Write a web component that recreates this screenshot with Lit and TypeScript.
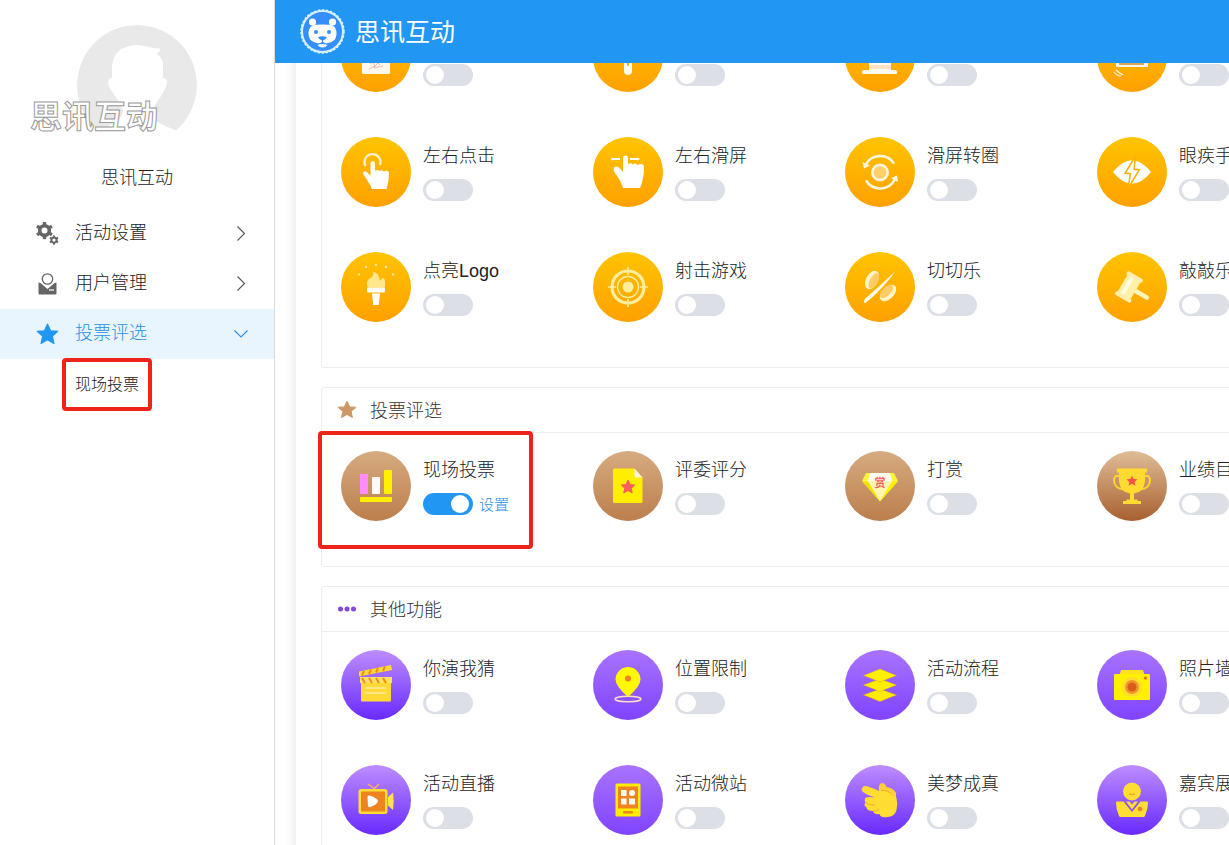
import { LitElement, html, css, svg, nothing } from "lit";
import type { SVGTemplateResult } from "lit";
import { customElement, property } from "lit/decorators.js";
import { classMap } from "lit/directives/class-map.js";

const STAR = "M0 -10 L3 -3.6 L9.8 -3 L4.7 1.6 L6.2 8.6 L0 5 L-6.2 8.6 L-4.7 1.6 L-9.8 -3 L-3 -3.6 Z";

const icons: Record<string, SVGTemplateResult> = {
  note: svg`<rect x="21" y="20" width="28" height="32" rx="1" fill="#fff8ec"/>
    <path d="M29 42 l3 -2 2 4 3 -3 2 2 M28 47 l6 -3 -1 2 9 -2" stroke="#ffaaa0" stroke-width=".8" fill="none"/>`,
  pill: svg`<rect x="31" y="20" width="8" height="33" rx="4" fill="#fffaf0"/><rect x="34" y="30" width="2" height="14" rx="1" fill="#ffb000"/>`,
  hat: svg`<path d="M24 20h22v28H24z" fill="#fffaf2"/><path d="M24 43h22v4H24z" fill="#ffe3c4"/><rect x="17" y="48" width="35" height="4" rx="1.5" fill="#fffaf0"/>`,
  shake: svg`<rect x="19" y="20" width="32" height="25" rx="1" fill="#fff8e6"/><rect x="22" y="24" width="25" height="19" fill="#d9a45c"/>
    <path d="M17 50 q3 4 7 4 M19 48 q3 3 7 5" stroke="#fff8e6" stroke-width="1.2" fill="none"/>`,
  tap: svg`<path d="M24.500 29 a8 8 0 1 1 14.500 -1" stroke="#fff3d0" stroke-width="2.200" fill="none"/>
    <path d="M29.500 26.500 q0 -2.500 2.200 -2.500 q2.200 0 2.200 2.500 v7.500 q2 -2 4.400 0 q2.200 -1.500 4.400 0.500 q4.500 -2 5.300 1 q0 8 -2.500 16.500 h-14.500 q-2 -5 -7.500 -13 q-2 -3 -1 -4.300 q2.500 -1.500 4.500 1.500 l2.500 2.500z" fill="#fff"/>`,
  swipe: svg`<path d="M19 22h8M37 22h8" stroke="#fff" stroke-width="2.200"/><path d="M17.500 22l2.500 -1.800v3.600zM47 22l-2.500 -1.800v3.600z" fill="#fff"/>
    <path d="M30 21.500 q0 -3 2.500 -3 q2.500 0 2.500 3 v6 q2 -2.500 5 0 q2 -2 4.500 0.500 q6 -2.500 6.500 2 q0 12 -4 21 h-17 q-2 -7 -8 -15 q-2.500 -4 -0.500 -6 q3 -1.500 5.500 1.500 l3 3z" fill="#fff"/>`,
  rotate: svg`<circle cx="35" cy="35.500" r="9" fill="#fff5dd"/><circle cx="35" cy="35.500" r="6.300" fill="#ffd06a"/>
    <path d="M20.500 28 A16.500 16.500 0 0 1 49 26.500 M50 42 A16.500 16.500 0 0 1 21 43.500" stroke="#fff8e0" stroke-width="2.500" fill="none"/>
    <path d="M17.500 25l1.500 6.500 6 -3zM53 45l-1 -6.500 -6 2.500z" fill="#fff8e0"/>`,
  eye: svg`<path d="M16 35 Q35 11.500 54 35 Q35 58.500 16 35z" fill="#fff"/>
    <path d="M38.500 19 L28 36.500 h5.500 L31 51.500 L42.500 32.500 h-5.500z" fill="#fff" stroke="#ffae08" stroke-width="1.500" stroke-linejoin="round"/>`,
  torch: svg`<g fill="#fff8dc"><circle cx="18" cy="22.500" r="1"/><circle cx="25" cy="15" r="1"/><circle cx="35" cy="13" r="1"/><circle cx="45" cy="15" r="1"/><circle cx="52" cy="22.500" r="1"/></g>
    <path d="M26.500 35.500 q-2 -7 3 -9.500 q4 -3 2.500 -6.500 q7 2.500 6.500 9 q2 -0.500 2.500 -2.500 q3 0 3 4 v5.500z" fill="#ffe78e"/>
    <rect x="26" y="35.500" width="18" height="5" rx="1.500" fill="#fff"/><path d="M31 41.500h8l-1.200 11.500h-5.600z" fill="#fff"/>`,
  target: svg`<g stroke="#ffeda0" fill="none"><circle cx="35" cy="35" r="16" stroke-width="3.200"/><circle cx="35" cy="35" r="10.500" stroke-width="1.300"/>
    <path d="M35 15v8M35 47v8M15 35h8M47 35h8" stroke-width="1.600"/></g><circle cx="35" cy="35" r="5.500" fill="#ffef9c"/>`,
  slice: svg`<path d="M50.500 19 Q38 37 20.500 51 l-1.800 -0.500 1 -3.500 Q36 33 50.500 19z" fill="#fffbe6"/>
    <g transform="rotate(28 27 28)"><ellipse cx="27" cy="28" rx="6" ry="10" fill="#fff5c8"/><ellipse cx="29" cy="28" rx="4" ry="8.500" fill="#ffcc66"/></g>
    <g transform="rotate(45 43 41)"><ellipse cx="43" cy="41" rx="6" ry="10" fill="#fff5c8"/><ellipse cx="41" cy="41" rx="4" ry="8.500" fill="#ffcc66"/></g>`,
  hammer: svg`<g transform="rotate(30 32 35)"><rect x="38" y="33" width="17" height="4.500" rx="2.200" fill="#fff2bd"/>
    <rect x="24.500" y="24" width="15" height="22" fill="#fff2a6"/><rect x="28" y="24" width="4" height="22" fill="#fffbe0"/>
    <rect x="23" y="21.500" width="18" height="4" rx="1.500" fill="#ffeeb0"/><rect x="23" y="44.500" width="18" height="4" rx="1.500" fill="#ffeeb0"/></g>`,
  vote: svg`<rect x="19" y="23" width="8" height="20" rx="1" fill="#ff8cff"/><rect x="31" y="26" width="8" height="17" rx="1" fill="#fffafa"/>
    <rect x="43" y="19" width="8" height="24" rx="1" fill="#fff000"/><rect x="19" y="46" width="32" height="5" rx="1" fill="#ffee00"/>`,
  score: svg`<path d="M21.500 17.500h20l8 9v24.500q0 1 -1 1h-27q-1.500 0 -1.500 -1v-32q0 -1.500 1.500 -1.500z" fill="#ffee00"/><path d="M41.500 17.500v7.500q0 1.500 1.500 1.500h6.500z" fill="#fff6cf"/>
    <path d=${STAR} transform="translate(35 36) scale(.65)" fill="#ff5d5d" stroke="#ff5d5d" stroke-width="2" stroke-linejoin="round"/>`,
  reward: svg`<path d="M21 22h28l4 8 -18 20.500L17 30z" fill="#fff33a"/><path d="M17 30l7 1 11 19.500z" fill="#f5e100"/><path d="M53 30l-7 1 -11 19.500z" fill="#ffef00"/>
    <path d="M25 22h20l2 8 -12 18L23 30z" fill="#fffdf0"/><path d="M23 30h24L35 50z" fill="#fff6b0"/>
    <text x="35" y="35.500" text-anchor="middle" font-size="11" font-weight="700" fill="#ff6161">赏</text>`,
  trophy: svg`<g fill="none" stroke="#ffd42f" stroke-width="2"><path d="M22 25h-3q-3 2 -1.500 7q2 6 8 6M48 25h3q3 2 1.500 7q-2 6 -8 6"/></g>
    <path d="M20 17.500h30v4h-2v9q-1 11 -11 12v6h3.500v1.500h3.500v3h-18v-3h3.500v-1.500h3.500v-6q-10 -1 -11 -12v-9h-2z" fill="#ffda30"/>
    <path d=${STAR} transform="translate(35 30) scale(.55)" fill="#fb5148"/>`,
  clapper: svg`<path d="M20 33h30v17.500q0 1 -1 1h-28q-1 0 -1 -1z" fill="#ffd936"/><path d="M24 38h21M24 43h21" stroke="#fff8cf" stroke-width="1.200"/>
    <path d="M18 21.500l32 -6.500 1 5 -33 6.500z" fill="#ffd936"/><rect x="19" y="27" width="32" height="6" fill="#ffe064"/>
    <path d="M23 21l-2 4.500M30 19.500l-2 4.500M37 18l-2 4.500M44 16.500l-2 4.500M21 28l3 5M28 28l3 5M35 28l3 5M42 28l3 5" stroke="#f08c1e" stroke-width="2"/>`,
  pin: svg`<ellipse cx="35" cy="49" rx="13" ry="2.800" fill="none" stroke="#ffdfc0" stroke-width="1.600"/>
    <path d="M35 47 Q22.500 36 22.500 29.500 a12.500 12.500 0 0 1 25 0 Q47.500 36 35 47z" fill="#fff900"/><circle cx="35" cy="28.500" r="3" fill="#f08020"/>`,
  layers: svg`<g stroke="#e2a600" stroke-width=".4"><path d="M35 39l16.500 6q-8 3 -16.500 6.500q-8.500 -3.500 -16.500 -6.500z" fill="#ffec00"/><path d="M35 29l16.500 6q-8 3 -16.500 6.500q-8.500 -3.500 -16.500 -6.500z" fill="#ffee00"/>
    <path d="M35 19l16.500 6.500q-8 3 -16.500 6.500q-8.500 -3.500 -16.500 -6.500z" fill="#fff000"/></g>`,
  camera: svg`<path d="M24 20h22l1.500 5h-25z" fill="#ffe21c"/><rect x="17" y="24" width="36" height="26" rx="1" fill="#fff000"/>
    <circle cx="35" cy="37" r="10" fill="#ffda30"/><circle cx="35" cy="37" r="7" fill="#f2962b"/><circle cx="35" cy="37" r="4.500" fill="#d95c18"/><circle cx="48.500" cy="28" r="1.500" fill="#e26a1a"/>`,
  live: svg`<path d="M34 24l-7 -5M33 24l5 -5" stroke="#ffb75a" stroke-width="1.400"/><path d="M47 32l5 -4.500q1.500 9 0 17.500l-5 -4.500z" fill="#ffe14c"/>
    <rect x="17.500" y="24" width="29" height="25" rx="2.500" fill="#ffdb36"/><rect x="20" y="26.500" width="24" height="20" rx="1" fill="#ee8420"/>
    <path d="M26.500 32q0 -2 2 -1.500q8 2.500 8.500 5.500q-0.500 3.500 -8 6q-1.500 0.500 -2 -1z" fill="#fff"/>`,
  site: svg`<rect x="22.500" y="18.500" width="25" height="33" rx="1.500" fill="#ffee00"/><rect x="25" y="21.500" width="20" height="22" fill="#f08420"/>
    <g fill="#fffaf2"><rect x="28" y="25" width="5.500" height="6"/><circle cx="39" cy="28" r="3"/><rect x="28" y="33.500" width="5.500" height="6"/><rect x="36" y="33.500" width="6" height="6"/></g>
    <rect x="30" y="46" width="10" height="2.500" rx="1" fill="#f08420"/>`,
  hand: svg`<path d="M34 26q-1 -8 3.500 -8q2.500 0 4 4q7 1 9.500 6v8l-14 -6z" fill="#ffcf3a"/>
    <path d="M17 23.500q1 -3.500 6 -2q6 2 11 4.500q4 -2 8 0q7 1.500 9.500 7q1.500 6 0 12q-2 7 -9 7q-7 1 -8 -3q-5 1 -6.500 -3q-6 0 -6.500 -3.500q-3.500 -2.500 -1 -5q-2 -3 0.500 -5q3 -1 9 0q-9 -3 -12 -5.500q-2 -2 -1.500 -3.500z" fill="#ffdd33"/>
    <path d="M21 38q5 3 9 2M28 46q4 1 6 -2M36 25.500q7 -1 12 5" stroke="#f3a728" stroke-width=".9" fill="none"/>`,
  guest: svg`<circle cx="35" cy="26.500" r="9" fill="#ffdd33"/><path d="M32 29q3 1 6 0" stroke="#e69a20" stroke-width="1" fill="none"/>
    <path d="M19 37.500q0 -1 1 -1h6.500l8.500 10.500 8.500 -10.500h6.500q1 0 1 1q0 7 -3 13.500q-0.500 1 -2 1h-22q-1.500 0 -2 -1q-3 -6.500 -3 -13.500z" fill="#ffdd33"/>
    <path d="M29 36.500h3.500l2.500 3 2.500 -3h3.500l-6 8z" fill="#ffdd33"/><circle cx="43" cy="44" r="2.300" fill="#ee7f22"/>`,
};

interface Feature { icon: string; label?: string; tone: string; on?: boolean; marked?: boolean }
interface Group { title?: string; kind: "games" | "vote" | "other"; items: Feature[] }

const groups: Group[] = [
  { kind: "games", items: [
    { icon: "note", tone: "gold" }, { icon: "pill", tone: "gold" }, { icon: "hat", tone: "gold" }, { icon: "shake", tone: "gold" },
    { icon: "tap", label: "左右点击", tone: "gold" }, { icon: "swipe", label: "左右滑屏", tone: "gold" },
    { icon: "rotate", label: "滑屏转圈", tone: "gold" }, { icon: "eye", label: "眼疾手快", tone: "gold" },
    { icon: "torch", label: "点亮Logo", tone: "gold" }, { icon: "target", label: "射击游戏", tone: "gold" },
    { icon: "slice", label: "切切乐", tone: "gold" }, { icon: "hammer", label: "敲敲乐", tone: "gold" },
  ] },
  { title: "投票评选", kind: "vote", items: [
    { icon: "vote", label: "现场投票", tone: "bronze", on: true, marked: true }, { icon: "score", label: "评委评分", tone: "bronze" },
    { icon: "reward", label: "打赏", tone: "bronze" }, { icon: "trophy", label: "业绩目标", tone: "copper" },
  ] },
  { title: "其他功能", kind: "other", items: [
    { icon: "clapper", label: "你演我猜", tone: "violet" }, { icon: "pin", label: "位置限制", tone: "purple" },
    { icon: "layers", label: "活动流程", tone: "purple" }, { icon: "camera", label: "照片墙", tone: "purple" },
    { icon: "live", label: "活动直播", tone: "violet" }, { icon: "site", label: "活动微站", tone: "purple" },
    { icon: "hand", label: "美梦成真", tone: "violet" }, { icon: "guest", label: "嘉宾展示", tone: "violet" },
  ] },
];

@customElement("feature-card")
class FeatureCard extends LitElement {
  @property({ attribute: false }) feature!: Feature;

  static styles = css`
    :host { display: block; height: 115px; }
    .card { position: relative; display: flex; gap: 12px; }
    .disc { flex: none; width: 70px; height: 70px; border-radius: 50%; }
    .gold { background: linear-gradient(#ffc400, #ffa000); }
    .bronze { background: linear-gradient(#d6ab80, #bc7e4c); }
    .copper { background: linear-gradient(#dfbd97, #a86030); }
    .violet { background: linear-gradient(#bd8dff, #682aff); }
    .purple { background: linear-gradient(#a973ff, #7f44ff); }
    .icon { display: block; width: 70px; height: 70px; }
    .info { display: flex; flex-direction: column; gap: 11px; padding-top: 7px; }
    .label { height: 24px; font-size: 18px; line-height: 24px; white-space: nowrap; color: #222; }
    .controls { display: flex; gap: 6px; height: 22px; align-items: center; }
    .switch { appearance: none; position: relative; flex: none; width: 50px; height: 22px; margin: 0; border-radius: 11px; background: #dcdfe6; cursor: pointer; }
    .switch::before { content: ""; position: absolute; left: 3px; top: 2px; width: 18px; height: 18px; border-radius: 50%; background: #fff; }
    .switch:checked { background: #2196f3; }
    .switch:checked::before { left: 28px; }
    .setup { font-size: 15px; line-height: 24px; padding-top: 2px; color: #2a8fe2; text-decoration: none; white-space: nowrap; }
    .mark { position: absolute; left: -23px; top: -20px; box-sizing: border-box; width: 215px; height: 118px; border: 4px solid #ee241b; border-radius: 4px; pointer-events: none; }
  `;

  render() {
    const f = this.feature;
    return html`<div class="card">
      <div class=${classMap({ disc: true, [f.tone]: true })}><svg class="icon" viewBox="0 0 70 70" aria-hidden="true">${icons[f.icon]}</svg></div>
      <div class="info">
        <label class="label" for="toggle">${f.label ?? nothing}</label>
        <div class="controls">
          <input class="switch" id="toggle" type="checkbox" role="switch" .checked=${!!f.on} aria-label=${f.label ?? "开关"} />
          ${f.on ? html`<a class="setup" href="#setup">设置</a>` : nothing}
        </div>
      </div>
      ${f.marked ? html`<div class="mark"></div>` : nothing}
    </div>`;
  }
}

@customElement("side-menu")
class SideMenu extends LitElement {
  static styles = css`
    :host { display: flex; flex-direction: column; box-sizing: border-box; flex: none; width: 275px; border-right: 1px solid #d9dce1; background: #fff; color: #222; }
    .profile { position: relative; display: flex; flex-direction: column; align-items: center; gap: 21px; padding-top: 25px; height: 184px; }
    .avatar { width: 120px; height: 120px; }
    .brand { position: absolute; left: 30px; top: 97px; font-size: 32px; line-height: 40px; font-weight: 700; color: #fff; -webkit-text-stroke: 1px #999; white-space: nowrap; }
    .name { font-size: 18px; line-height: 24px; }
    .item { display: flex; align-items: center; width: 100%; height: 50px; padding: 0 25px 0 36px; border: 0; background: none; font: inherit; font-size: 18px; line-height: 24px; color: inherit; text-align: left; cursor: pointer; }
    .glyph { flex: none; width: 24px; height: 24px; margin-right: 15px; color: #666; }
    .text { flex: 1; padding-bottom: 3px; }
    .arrow { width: 16px; height: 16px; color: #555; }
    .active, .active .arrow { color: #2a8fe2; }
    .active { background: #e8f4fe; }
    .active .glyph { color: #2196f3; }
    .sub { align-self: flex-start; box-sizing: border-box; height: 53px; margin: -1px 0 0 62px; padding: 0 9px; border: 4px solid #ee241b; border-radius: 4px; font-size: 16px; line-height: 45px; color: inherit; text-decoration: none; white-space: nowrap; }
  `;

  private gear(cx: number, cy: number, r: number) {
    return svg`<circle cx=${cx} cy=${cy} r=${r} fill="none" stroke="currentColor" stroke-width=${r * 0.75}/>
      ${[0, 60, 120, 180, 240, 300].map((a) => svg`<rect x=${cx - r * 0.35} y=${cy - r * 1.8} width=${r * 0.7} height=${r * 0.7} fill="currentColor" transform=${`rotate(${a} ${cx} ${cy})`}/>`)}`;
  }

  render() {
    const right = html`<svg class="arrow" viewBox="0 0 16 16" fill="none" stroke="currentColor" stroke-width="1.1"><path d="M4.500 0.500l7 7 -7 7"/></svg>`;
    return html`
      <div class="profile">
        <svg class="avatar" viewBox="0 0 120 120" aria-hidden="true">
          <path fill="#e9e9e9" d="M60 0a60 60 0 0 1 39 105.500Q88 101 82 98Q76 94 75 87Q76 82 80 77L86 68Q90 61 90 56Q90 54 86 53V40Q86 33 79.500 28.500Q83 27 83.500 23.500Q78 24 70 21.500Q65 20 60 20Q35 21 35 44V53Q31 53 31 57Q31 62 36 68L42 77Q46 82 46 87Q44 94 38 98Q32 101 21 105.500A60 60 0 0 1 60 0z"/>
        </svg>
        <div class="brand">思讯互动</div>
        <div class="name">思讯互动</div>
      </div>
      <button class="item">
        <svg class="glyph" viewBox="0 0 24 24">${this.gear(8.5, 8.5, 4.8)}${this.gear(18, 18, 2.6)}</svg>
        <span class="text">活动设置</span>${right}
      </button>
      <button class="item">
        <svg class="glyph" viewBox="0 0 24 24"><circle cx="11.500" cy="7" r="5.200" fill="none" stroke="currentColor" stroke-width="1.300"/>
          <path fill="currentColor" d="M2.500 10.500l2 0.500 7 6 7 -6 2 -0.500v11q0 1 -1 1h-16q-1 0 -1 -1z"/><path d="M13 18h5" stroke="#fff" stroke-width="1.200"/></svg>
        <span class="text">用户管理</span>${right}
      </button>
      <button class="item active" aria-expanded="true">
        <svg class="glyph" viewBox="-12 -12 24 24"><path d=${STAR} transform="translate(-.5 .5) scale(1.05)" fill="currentColor" stroke="currentColor" stroke-width="1" stroke-linejoin="round"/></svg>
        <span class="text">投票评选</span>
        <svg class="arrow" viewBox="0 0 16 16" fill="none" stroke="currentColor" stroke-width="1.1"><path d="M1.500 4.500l6.500 6.500 6.500 -6.500"/></svg>
      </button>
      <a class="sub" href="#vote">现场投票</a>
    `;
  }
}

@customElement("app-root")
class AppRoot extends LitElement {
  static styles = css`
    :host { display: flex; height: 100vh; overflow: hidden; background: #fff; color: #222; font-family: "Liberation Sans", "Noto Sans CJK SC", sans-serif; font-weight: 300; }
    .main { flex: 1; min-width: 0; display: flex; flex-direction: column; }
    .top { flex: none; display: flex; align-items: center; gap: 10px; height: 63px; padding: 0 25px; background: #2196f3; color: #fff; }
    .logo { width: 45px; height: 45px; }
    .title { margin: 0; font-size: 25px; line-height: 36px; font-weight: 400; }
    .scroll { flex: 1; min-height: 0; overflow: auto; scrollbar-width: none; padding-left: 21px; }
    .sheet { display: flex; flex-direction: column; gap: 19px; width: max-content; min-width: 100%; box-sizing: border-box; padding: 0 25px 20px; background: #fff; box-shadow: 0 0 12px #0000001f; }
    .panel { border: 1px solid #ebeef0; border-radius: 3px; }
    .games { border-top: 0; }
    .head { display: flex; align-items: center; gap: 13px; height: 44px; padding-left: 15px; border-bottom: 1px solid #ebeef0; }
    .head-icon { width: 20px; height: 20px; }
    .head-text { margin: 0; padding-top: 2px; font-size: 18px; line-height: 24px; font-weight: 300; color: #333; }
    .grid { display: grid; grid-template-columns: repeat(4, minmax(252px, 1fr)); padding: 18px 0 0 19px; }
  `;

  firstUpdated() {
    const area = this.renderRoot.querySelector(".scroll");
    if (area) area.scrollTop = 59;
  }

  render() {
    return html`
      <side-menu></side-menu>
      <div class="main">
        <header class="top">
          <svg class="logo" viewBox="0 0 45 45" aria-hidden="true">
            <circle cx="22.500" cy="22.500" r="20.500" fill="#348ffb" stroke="#d8f0ff" stroke-width="2"/>
            <circle cx="22.500" cy="22.500" r="21.500" fill="none" stroke="#d8f0ff" stroke-width="1.500" stroke-dasharray="2.500 1.500"/>
            <g fill="#fff"><circle cx="12.500" cy="13" r="3.600"/><circle cx="32.500" cy="13" r="3.600"/>
            <path d="M22.500 15.500q7 0 10 1q4 2 4 8q0 6 -5 8.500q-4 1.500 -9 1.500t-9 -1.500q-5 -2.500 -5 -8.500q0 -6 4 -8q3 -1 10 -1z"/><path d="M17.500 36q5 -4 10 0q-2 2.500 -5 2.500t-5 -2.500z"/></g>
            <g fill="#348ffb"><circle cx="16" cy="23" r="2"/><circle cx="29" cy="23" r="2"/><path d="M18 28q4.500 -1.500 9 0q-1.500 3 -4 3.500v1.500l5 2.500q-5.500 -1 -11 0l5 -2.500v-1.500q-3 -0.500 -4 -3.500z"/></g>
          </svg>
          <h1 class="title">思讯互动</h1>
        </header>
        <main class="scroll">
          <div class="sheet">
            ${groups.map((g) => html`<section class="panel ${g.kind}">
              ${g.title ? html`<div class="head">
                <svg class="head-icon" viewBox="0 0 20 20" aria-hidden="true">${g.kind === "vote"
                  ? svg`<path d=${STAR} transform="translate(10 10) scale(.85)" fill="#cc9966" stroke="#cc9966" stroke-width="1.500" stroke-linejoin="round"/>`
                  : svg`<g fill="#8347e0"><circle cx="3.500" cy="10" r="2.500"/><circle cx="10" cy="10" r="2.500"/><circle cx="16.500" cy="10" r="2.500"/></g>`}</svg>
                <h2 class="head-text">${g.title}</h2>
              </div>` : nothing}
              <div class="grid">${g.items.map((f) => html`<feature-card .feature=${f}></feature-card>`)}</div>
            </section>`)}
          </div>
        </main>
      </div>
    `;
  }
}
